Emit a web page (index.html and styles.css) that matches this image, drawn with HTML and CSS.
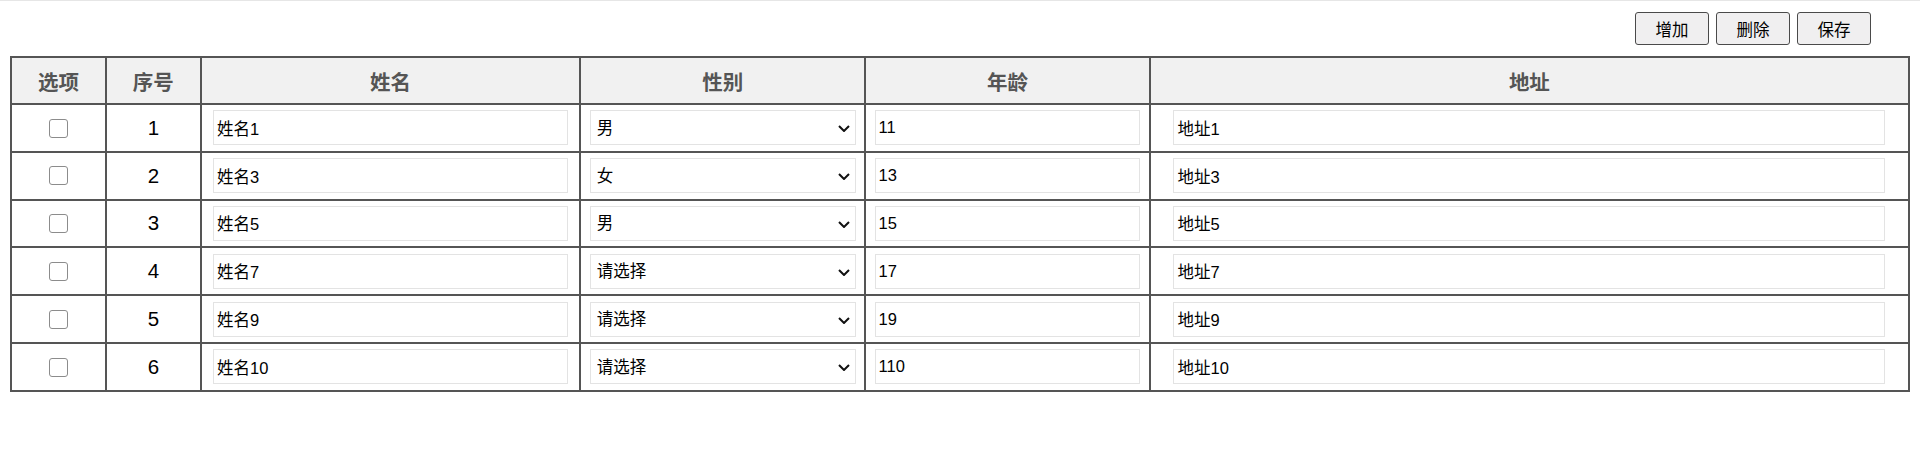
FILE: index.html
```html
<!DOCTYPE html>
<html lang="zh-CN">
  <head>
    <meta charset="UTF-8" />
    <meta name="viewport" content="width=device-width, initial-scale=1.0" />
    <title>人员列表</title>
    <link rel="stylesheet" href="styles.css">
  </head>
  <body>
    <div class="toolbar">
      <button class="btn">增加</button>
      <button class="btn">删除</button>
      <button class="btn">保存</button>
    </div>

    <div class="table-wrap">
      <table class="grid">
        <colgroup>
          <col class="col-check" />
          <col class="col-no" />
          <col class="col-name" />
          <col class="col-sex" />
          <col class="col-age" />
          <col class="col-addr" />
        </colgroup>
        <thead>
          <tr>
            <th>选项</th>
            <th>序号</th>
            <th>姓名</th>
            <th>性别</th>
            <th>年龄</th>
            <th>地址</th>
          </tr>
        </thead>
        <tbody>
          <tr>
            <td><input type="checkbox" class="check" /></td>
            <td class="no">1</td>
            <td><input type="text" class="field" value="姓名1" /></td>
            <td>
              <span class="select-box">
                <select class="field">
                  <option>请选择</option>
                  <option selected>男</option>
                  <option>女</option>
                </select>
                <svg class="arrow" viewBox="0 0 12 7"><path d="M1 1 L6 6 L11 1" /></svg>
              </span>
            </td>
            <td><input type="text" class="field" value="11" /></td>
            <td><input type="text" class="field" value="地址1" /></td>
          </tr>
          <tr>
            <td><input type="checkbox" class="check" /></td>
            <td class="no">2</td>
            <td><input type="text" class="field" value="姓名3" /></td>
            <td>
              <span class="select-box">
                <select class="field">
                  <option>请选择</option>
                  <option>男</option>
                  <option selected>女</option>
                </select>
                <svg class="arrow" viewBox="0 0 12 7"><path d="M1 1 L6 6 L11 1" /></svg>
              </span>
            </td>
            <td><input type="text" class="field" value="13" /></td>
            <td><input type="text" class="field" value="地址3" /></td>
          </tr>
          <tr>
            <td><input type="checkbox" class="check" /></td>
            <td class="no">3</td>
            <td><input type="text" class="field" value="姓名5" /></td>
            <td>
              <span class="select-box">
                <select class="field">
                  <option>请选择</option>
                  <option selected>男</option>
                  <option>女</option>
                </select>
                <svg class="arrow" viewBox="0 0 12 7"><path d="M1 1 L6 6 L11 1" /></svg>
              </span>
            </td>
            <td><input type="text" class="field" value="15" /></td>
            <td><input type="text" class="field" value="地址5" /></td>
          </tr>
          <tr>
            <td><input type="checkbox" class="check" /></td>
            <td class="no">4</td>
            <td><input type="text" class="field" value="姓名7" /></td>
            <td>
              <span class="select-box">
                <select class="field">
                  <option selected>请选择</option>
                  <option>男</option>
                  <option>女</option>
                </select>
                <svg class="arrow" viewBox="0 0 12 7"><path d="M1 1 L6 6 L11 1" /></svg>
              </span>
            </td>
            <td><input type="text" class="field" value="17" /></td>
            <td><input type="text" class="field" value="地址7" /></td>
          </tr>
          <tr>
            <td><input type="checkbox" class="check" /></td>
            <td class="no">5</td>
            <td><input type="text" class="field" value="姓名9" /></td>
            <td>
              <span class="select-box">
                <select class="field">
                  <option selected>请选择</option>
                  <option>男</option>
                  <option>女</option>
                </select>
                <svg class="arrow" viewBox="0 0 12 7"><path d="M1 1 L6 6 L11 1" /></svg>
              </span>
            </td>
            <td><input type="text" class="field" value="19" /></td>
            <td><input type="text" class="field" value="地址9" /></td>
          </tr>
          <tr>
            <td><input type="checkbox" class="check" /></td>
            <td class="no">6</td>
            <td><input type="text" class="field" value="姓名10" /></td>
            <td>
              <span class="select-box">
                <select class="field">
                  <option selected>请选择</option>
                  <option>男</option>
                  <option>女</option>
                </select>
                <svg class="arrow" viewBox="0 0 12 7"><path d="M1 1 L6 6 L11 1" /></svg>
              </span>
            </td>
            <td><input type="text" class="field" value="110" /></td>
            <td><input type="text" class="field" value="地址10" /></td>
          </tr>
        </tbody>
      </table>
    </div>
  </body>
</html>
```

FILE: styles.css
```css
body {
  margin: 0;
  border-top: 1px solid #e6e6e6;
  font-family: "Liberation Sans", "Noto Sans CJK SC", sans-serif;
  color: #000;
  background: #fff;
}

.toolbar {
  display: flex;
  justify-content: flex-end;
  gap: 7px;
  padding: 11px 49px 0 0;
}

.btn {
  width: 74px;
  height: 33px;
  padding: 0;
  font-family: "Liberation Sans", "Noto Sans CJK SC", sans-serif;
  font-size: 16.5px;
  color: #000;
  background-color: #f0eff0;
  border: 1px solid #4a4a4a;
  border-radius: 3px;
  cursor: pointer;
}

.table-wrap {
  padding: 11px 10px 0 10px;
}

.grid {
  width: 100%;
  table-layout: fixed;
  border-collapse: collapse;
}

.col-check,
.col-no {
  width: 5%;
}

.col-name {
  width: 20%;
}

.col-sex,
.col-age {
  width: 15%;
}

.col-addr {
  width: 40%;
}

.grid th,
.grid td {
  border: 2px solid #555;
  padding: 0;
  text-align: center;
  vertical-align: middle;
}

.grid th {
  height: 45px;
  background-color: #f1f1f1;
  color: #555;
  font-size: 20.5px;
  font-weight: bold;
}

.grid td {
  height: 45.8px;
}

.grid td.no {
  font-size: 20.5px;
}

.check {
  appearance: none;
  width: 19px;
  height: 19px;
  margin: 0;
  vertical-align: middle;
  background: #fff;
  border: 1px solid #8c8c8c;
  border-radius: 3px;
}

.field {
  box-sizing: border-box;
  width: 94%;
  height: 35px;
  margin: 0;
  padding: 0 3px;
  font-family: "Liberation Sans", "Noto Sans CJK SC", sans-serif;
  font-size: 16.5px;
  color: #000;
  background: #fff;
  border: 1px solid #e3e3e3;
  border-radius: 0;
  outline: none;
  vertical-align: middle;
}

.select-box {
  position: relative;
  display: inline-block;
  width: 94%;
  vertical-align: middle;
}

.select-box select {
  appearance: none;
  width: 100%;
  padding: 0 6px;
}

.arrow {
  position: absolute;
  right: 6px;
  top: 15px;
  width: 12px;
  height: 7px;
  pointer-events: none;
}

.arrow path {
  fill: none;
  stroke: #111;
  stroke-width: 2;
}
```
